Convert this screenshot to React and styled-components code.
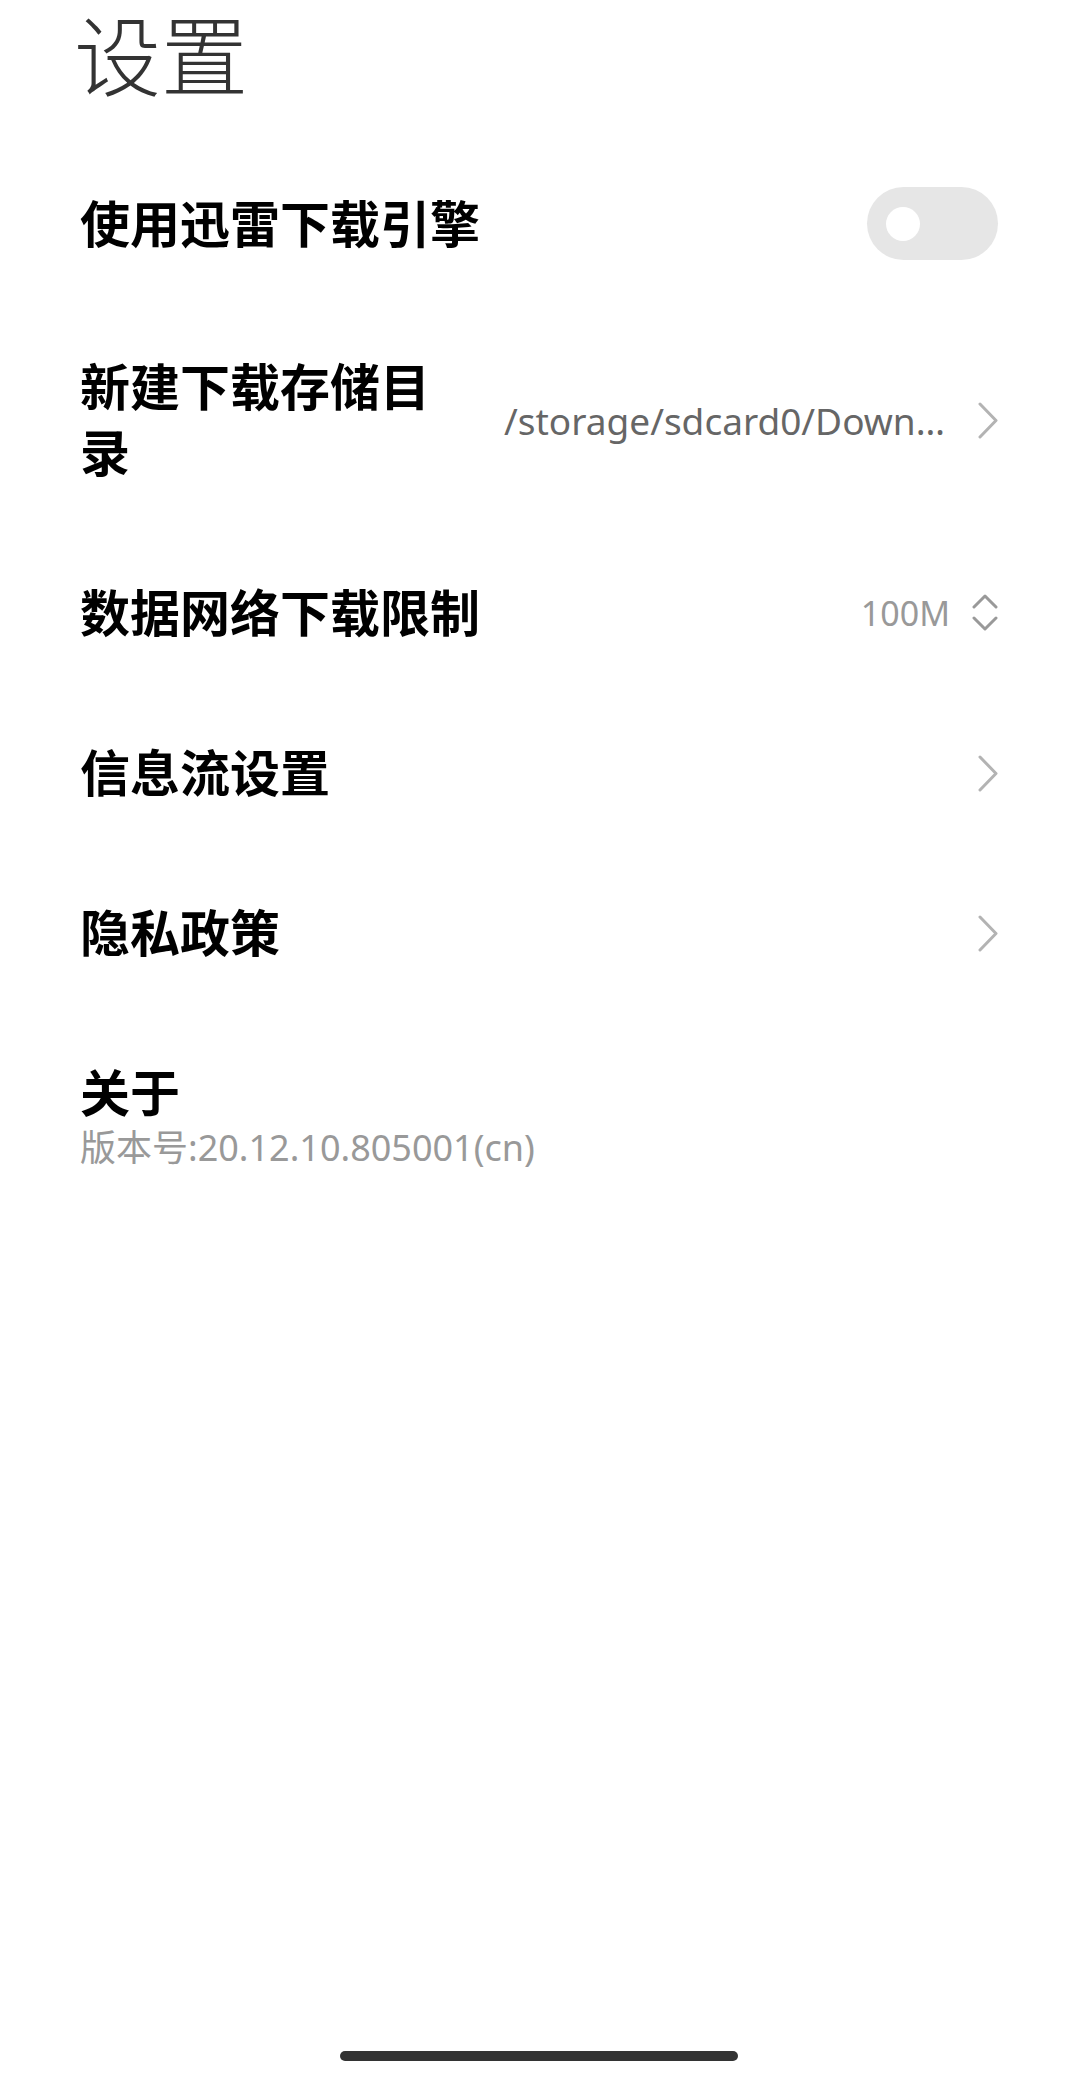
import React from "react";
import styled, { createGlobalStyle } from "styled-components";

const GlobalStyle = createGlobalStyle`
  html, body {
    margin: 0;
    padding: 0;
    background: #ffffff;
  }
  body {
    font-family: "Noto Sans", "Noto Sans CJK SC", sans-serif;
    -webkit-font-smoothing: antialiased;
  }
  * { box-sizing: border-box; }
`;

const Page = styled.div`
  min-height: 100vh;
  display: flex;
  flex-direction: column;
  padding: 0 80px 0 80px;
  background: #ffffff;
`;

const Header = styled.h1`
  margin: 2px 0 38px -6px;
  font-family: "Noto Sans CJK SC", sans-serif;
  font-size: 87px;
  line-height: 100px;
  font-weight: 300;
  color: #333333;
`;

const List = styled.div`
  display: flex;
  flex-direction: column;
`;

const Row = styled.div`
  display: flex;
  align-items: center;
  justify-content: space-between;
  gap: 56px;
  padding: 47px 0;
`;

const Title = styled.div`
  flex: 1;
  min-width: 0;
  margin: -3px 0 3px;
  font-family: "Noto Sans CJK SC", sans-serif;
  font-size: 50px;
  line-height: 66px;
  font-weight: 700;
  color: #000000;
`;

const TextBlock = styled.div`
  display: flex;
  flex-direction: column;
`;

const AboutTitle = styled(Title)`
  flex: none;
`;

const Sub = styled.div`
  font-size: 36px;
  line-height: 44px;
  color: #999999;
`;

const Trailing = styled.div`
  flex: none;
  display: flex;
  align-items: center;
  gap: ${(p) => p.$gap || 33}px;
`;

const Value = styled.span`
  font-size: ${(p) => p.$size || 37}px;
  color: ${(p) => p.$color || "#666666"};
  white-space: nowrap;
`;

const Toggle = styled.div`
  width: 131px;
  height: 73px;
  border-radius: 37px;
  background: #e6e6e6;
  display: flex;
  align-items: center;
  padding-left: 19px;
`;

const Knob = styled.div`
  width: 34px;
  height: 34px;
  border-radius: 50%;
  background: #ffffff;
`;

const HomeBar = styled.div`
  margin-top: auto;
  margin-bottom: 17px;
  align-self: center;
  width: 398px;
  height: 10px;
  border-radius: 5px;
  background: #333333;
`;

const Chevron = () => (
  <svg width="20" height="37" viewBox="0 0 20 37" fill="none">
    <path
      d="M2 2 L18 18.5 L2 35"
      stroke="#b3b3b3"
      strokeWidth="3"
      strokeLinecap="round"
      strokeLinejoin="round"
    />
  </svg>
);

const UpDown = () => (
  <svg width="26" height="38" viewBox="0 0 26 38" fill="none">
    <path
      d="M2 13 L13 2 L24 13"
      stroke="#999999"
      strokeWidth="3"
      strokeLinecap="round"
      strokeLinejoin="round"
    />
    <path
      d="M2 24 L13 35 L24 24"
      stroke="#999999"
      strokeWidth="3"
      strokeLinecap="round"
      strokeLinejoin="round"
    />
  </svg>
);

export default function App() {
  return (
    <>
      <GlobalStyle />
      <Page>
        <Header>设置</Header>
        <List>
          <Row>
            <Title>使用迅雷下载引擎</Title>
            <Toggle>
              <Knob />
            </Toggle>
          </Row>
          <Row>
            <Title>新建下载存储目录</Title>
            <Trailing>
              <Value>/storage/sdcard0/Down…</Value>
              <Chevron />
            </Trailing>
          </Row>
          <Row>
            <Title>数据网络下载限制</Title>
            <Trailing $gap={22}>
              <Value $size={34} $color="#999999">100M</Value>
              <UpDown />
            </Trailing>
          </Row>
          <Row>
            <Title>信息流设置</Title>
            <Chevron />
          </Row>
          <Row>
            <Title>隐私政策</Title>
            <Chevron />
          </Row>
          <Row>
            <TextBlock>
              <AboutTitle>关于</AboutTitle>
              <Sub>版本号:20.12.10.805001(cn)</Sub>
            </TextBlock>
          </Row>
        </List>
        <HomeBar />
      </Page>
    </>
  );
}
